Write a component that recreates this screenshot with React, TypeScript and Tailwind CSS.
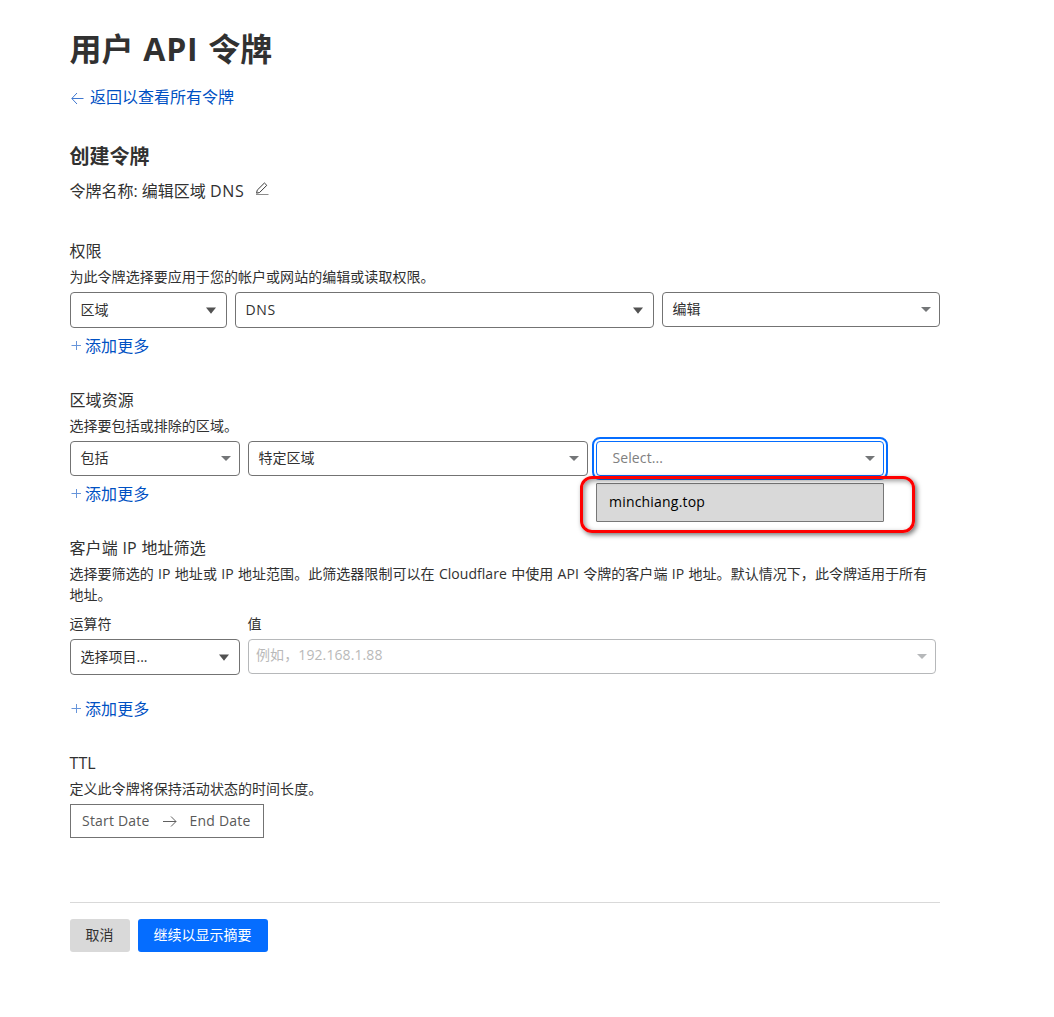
import type { ReactNode } from 'react';
import clsx from 'clsx';

type SelectProps = {
  children: ReactNode;
  className?: string;
  textClassName?: string;
  variant?: 'native' | 'search' | 'disabled';
  focused?: boolean;
};

function Select({ children, className, textClassName, variant = 'search', focused }: SelectProps) {
  return (
    <div
      className={clsx(
        'flex shrink-0 items-center justify-between rounded-[4px] border bg-white text-sm',
        variant === 'native' ? 'h-9 pr-[10px]' : 'h-[35px] pr-2',
        variant === 'disabled' ? 'border-[#b6b8ba] pl-[7px]' : focused ? 'border-[#056dff] pl-[15.5px]' : 'border-[#737373] pl-[9.5px]',
        focused && 'outline-2 outline-offset-2 outline-[#056dff]',
        className
      )}
    >
      <span className={clsx('leading-5', textClassName)}>{children}</span>
      {variant === 'native' ? (
        <svg className="mt-px h-[7px] w-[10px] fill-[#525252]" viewBox="0 0 10 7">
          <path d="M0 .5h10L5 6.7z" />
        </svg>
      ) : (
        <svg
          className={clsx('h-[5px] w-[10px]', variant === 'disabled' ? 'fill-[#b6b8ba]' : 'fill-[#747678]')}
          viewBox="0 0 10 5"
        >
          <path d="M0 0h10L5 5z" />
        </svg>
      )}
    </div>
  );
}

function AddMore({ className }: { className?: string }) {
  return (
    <a href="#" className={clsx('flex h-6 w-fit items-center text-[#0051c3]', className)}>
      <svg className="mr-[4px] ml-px size-[10px]" viewBox="0 0 10 10" stroke="#6795da" strokeWidth="1">
        <path d="M.5 4.5H10M5.5 0v9" />
      </svg>
      <span className="tracking-[0.1px]">添加更多</span>
    </a>
  );
}

type SectionProps = { title: string; description: string; className?: string; children: ReactNode };

function Section({ title, description, className, children }: SectionProps) {
  return (
    <section className={className}>
      <h3 className="-ml-[0.5px] h-6 leading-6 tracking-[0.1px] [word-spacing:0.4px]">{title}</h3>
      <p className="mt-[3px] mb-[5px] -ml-[0.5px] w-[862px] text-sm leading-[21px] tracking-[0.04px] [word-spacing:0.65px]">
        {description}
      </p>
      {children}
    </section>
  );
}

export default function App() {
  return (
    <main className="min-h-[1017px] w-[1054px] bg-white px-[70px] pt-[29px] font-['Open_Sans','Noto_Sans_CJK_SC',sans-serif] text-base leading-6 text-[#313131]">
      <div className="w-[870px]">
        <h1 className="-ml-[0.5px] h-10 text-[32px] leading-10 font-bold [word-spacing:1.5px]">
          用户 <span className="tracking-[0.8px]">API</span> 令牌
        </h1>
        <a href="#" className="mt-4 flex h-6 w-fit items-center text-[#0051c3]">
          <svg className="mt-[2px] mr-[6px] ml-px h-3 w-[13px]" viewBox="0 0 13 12" fill="none" stroke="#3f78d0">
            <path d="M12.5 6.5H1M6 1 .8 6.5 6 12" />
          </svg>
          返回以查看所有令牌
        </a>

        <h2 className="mt-[34px] -ml-[0.5px] h-7 text-[20px] leading-7 font-bold">创建令牌</h2>
        <div className="mt-[8px] flex h-6 items-center">
          <span className="-ml-[0.5px]">
            令牌名称: 编辑区域 <span className="tracking-[0.7px]">DNS</span>
          </span>
          <svg className="-mt-[4px] ml-[10px] h-[14px] w-[14px]" viewBox="0 0 14 14" fill="none" stroke="#3a3a3a">
            <path d="M2.2 8.2 9.4 1l2.4 2.3-7.2 7.2-3 .7z" />
            <path d="M1 12.5h12.5" stroke="#8c8c8c" />
          </svg>
        </div>

        <Section title="权限" description="为此令牌选择要应用于您的帐户或网站的编辑或读取权限。" className="mt-[36px]">
          <div className="flex h-9 gap-2">
            <Select variant="native" className="w-[157px]">区域</Select>
            <Select variant="native" className="w-[419px]" textClassName="tracking-[0.6px]">DNS</Select>
            <Select className="w-[278px]" textClassName="-mt-px">编辑</Select>
          </div>
          <AddMore className="mt-[6px]" />
        </Section>

        <Section title="区域资源" description="选择要包括或排除的区域。" className="mt-[30px]">
          <div className="flex gap-2">
            <Select className="w-[170px]" textClassName="-mt-[2px]">包括</Select>
            <Select className="w-[340px]" textClassName="-mt-[2px]">特定区域</Select>
            <div className="relative">
              <Select focused className="w-[288px]" textClassName="-mt-[2px] tracking-[0.1px] text-[#808080]">
                Select...
              </Select>
              <div className="absolute top-[42px] left-0 z-10 flex h-[39px] w-[288px] items-center rounded-[1px] border border-[#777] bg-[#d9d9d9] pb-[2px] pl-3 text-sm tracking-[0.2px] text-black">
                minchiang.top
              </div>
              {/* Callout around the open option */}
              <div className="absolute top-[35px] -left-4 z-20 h-[57px] w-[335px] rounded-[12px] border-3 border-[#fe0000] shadow-[2px_2px_5px_rgba(0,0,0,0.55),inset_2px_2px_5px_rgba(0,0,0,0.4)]" />
            </div>
          </div>
          <AddMore className="mt-[6px]" />
        </Section>

        <Section
          title="客户端 IP 地址筛选"
          description="选择要筛选的 IP 地址或 IP 地址范围。此筛选器限制可以在 Cloudflare 中使用 API 令牌的客户端 IP 地址。默认情况下，此令牌适用于所有地址。"
          className="mt-[30px]"
        >
          <div className="mt-2 flex gap-2 text-sm leading-[21px]">
            <div className="w-[170px]">
              <div className="mb-[5px] -ml-[0.5px]">运算符</div>
              <Select variant="native">选择项目...</Select>
            </div>
            <div className="w-[688px]">
              <div className="mb-[5px] -ml-[0.5px]">值</div>
              <Select variant="disabled" textClassName="-mt-1 tracking-[0.1px] text-[#b9b9b9]">
                例如，192.168.1.88
              </Select>
            </div>
          </div>
          <AddMore className="mt-[22px]" />
        </Section>

        <Section title="TTL" description="定义此令牌将保持活动状态的时间长度。" className="mt-[30px]">
          <div className="flex h-[34px] w-[194px] items-center border border-[#737373] pl-[11px] text-sm tracking-[0.2px] text-[#595959]">
            <span>Start Date</span>
            <svg className="mr-[13px] ml-[13px] h-3 w-[14px]" viewBox="0 0 14 12" fill="none" stroke="#606060">
              <path d="M0 6.5h13M8 1.5l5 5-5 5" />
            </svg>
            <span>End Date</span>
          </div>
        </Section>

        <div className="mt-16 flex gap-2 border-t border-[#d9d9d9] pt-4 text-sm">
          <button className="h-[33px] w-[60px] rounded-[3px] bg-[#d9d9d9] pr-px pb-px">取消</button>
          <button className="h-[33px] w-[130px] rounded-[3px] bg-[#056dff] pr-px pb-px text-white">继续以显示摘要</button>
        </div>
      </div>
    </main>
  );
}
